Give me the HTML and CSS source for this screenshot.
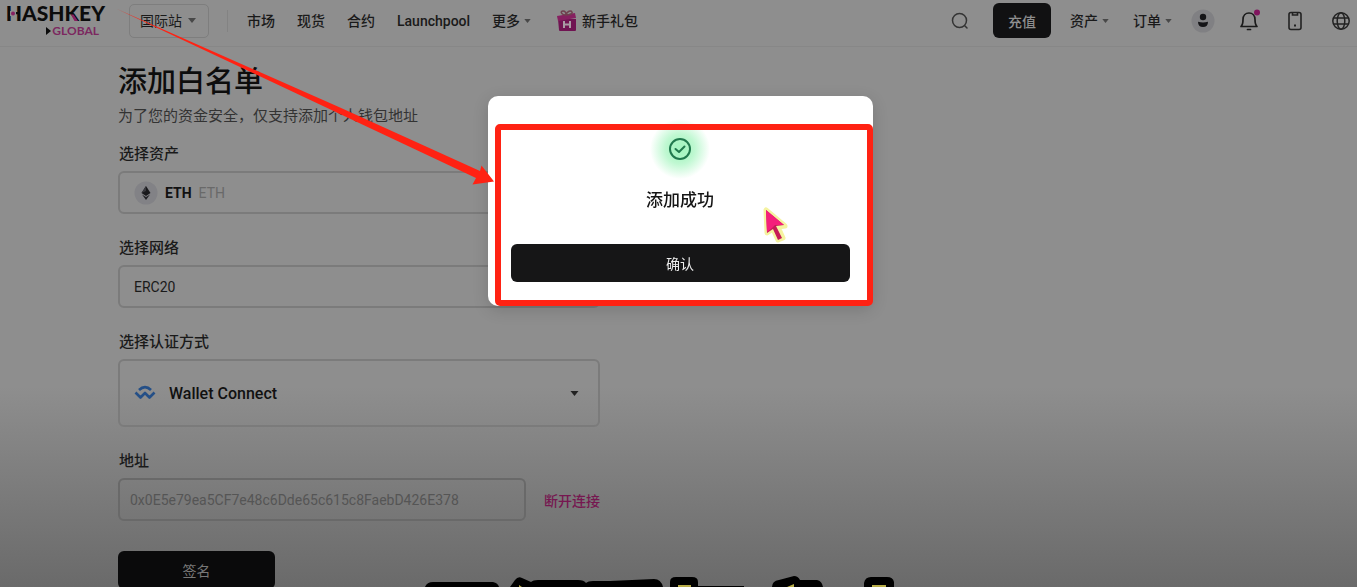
FILE: index.html
```html
<!DOCTYPE html>
<html lang="zh-CN">
<head>
<meta charset="utf-8">
<meta name="viewport" content="width=device-width, initial-scale=1">
<title>添加白名单</title>
<link rel="stylesheet" href="styles.css">
</head>
<body>
<header class="header">
  <a class="logo" href="#" aria-label="HASHKEY GLOBAL">
    <span class="logo-name">HASHKEY</span>
    <span class="logo-sub"><svg width="5" height="8" viewBox="0 0 5 8" aria-hidden="true"><path d="M0 0L5 4L0 8Z" fill="#0c0c0c"/></svg>GLOBAL</span>
    <svg class="logo-accent" width="98" height="18" viewBox="0 0 98 18" aria-hidden="true"><path d="M5 8H11V13H5Z" fill="#8e8e8e"/><circle cx="8" cy="10.500" r="2" fill="#861f61"/><path d="M66 11.500L68.500 11.500L73 18H69.500Z" fill="#861f61"/></svg>
  </a>
  <div class="site">
    <select class="site-select" aria-label="站点"><option>国际站</option></select>
    <svg class="caret" width="8" height="5" viewBox="0 0 8 5" aria-hidden="true"><path d="M0 0H8L4 5Z"/></svg>
  </div>
  <nav class="nav">
    <a href="#">市场</a>
    <a href="#">现货</a>
    <a href="#">合约</a>
    <a href="#">Launchpool</a>
    <button class="menu" type="button">更多<svg class="caret" width="7" height="4" viewBox="0 0 8 5" aria-hidden="true"><path d="M0 0H8L4 5Z"/></svg></button>
    <a class="gift" href="#"><svg width="20" height="22" viewBox="0 0 20 22" aria-hidden="true"><path d="M1 9H19V20Q19 21 18 21H3Q2 21 2 20Z" fill="#701452"/><path d="M0 6L18 3L19 8L1 11Z" fill="#862060"/><path d="M9 5C4 5 3 1 6 1C8 1 9 3 9 5C10 1 14 0 15 2C16 4 12 5 9 5" fill="none" stroke="#70404f" stroke-width="1.5"/><path d="M7 11V18M13 11V18M7 14.5H13" fill="none" stroke="#a99ba4" stroke-width="2"/></svg>新手礼包</a>
  </nav>
  <div class="tools">
    <button class="icon" type="button" aria-label="搜索"><svg width="18" height="18" viewBox="0 0 18 18" fill="none" stroke="#343434" stroke-width="1.5" stroke-linecap="round"><circle cx="8.5" cy="8.5" r="7"/><path d="M14 14L16 16"/></svg></button>
    <button class="deposit" type="button">充值</button>
    <button class="menu" type="button">资产<svg class="caret" width="7" height="4" viewBox="0 0 8 5" aria-hidden="true"><path d="M0 0H8L4 5Z"/></svg></button>
    <button class="menu orders" type="button">订单<svg class="caret" width="7" height="4" viewBox="0 0 8 5" aria-hidden="true"><path d="M0 0H8L4 5Z"/></svg></button>
    <button class="icon" type="button" aria-label="账户"><svg width="24" height="24" viewBox="0 0 24 24"><circle cx="12" cy="12" r="11.5" fill="#808083"/><circle cx="12" cy="8" r="3.2" fill="#151518"/><path d="M7 12.800Q12 14 17 12.800Q17 18 12 18Q7 18 7 12.800Z" fill="#151518"/></svg></button>
    <button class="icon" type="button" aria-label="通知"><svg width="22" height="24" viewBox="0 0 22 24" fill="none" stroke="#1b1b1b" stroke-width="1.7" stroke-linejoin="round" stroke-linecap="round"><path d="M3 17.500C5 15.500 5 13.500 5 10.500C5 6.500 7.500 4 11 4S17 6.500 17 10.500C17 13.500 17 15.500 19 17.500Z"/><path d="M9.500 20.500H12.500"/><circle cx="19" cy="3.500" r="3" fill="#80155e" stroke="none"/></svg></button>
    <button class="icon" type="button" aria-label="下载应用"><svg width="16" height="20" viewBox="0 0 16 20" fill="none" stroke="#222" stroke-width="1.600"><rect x="2" y="1.500" width="12" height="17" rx="2"/><path d="M5.500 2V4H10.500V2"/><path d="M7 14.500H9" stroke-width="2"/></svg></button>
    <button class="icon" type="button" aria-label="语言"><svg width="20" height="20" viewBox="0 0 20 20" fill="none" stroke="#222" stroke-width="1.500"><circle cx="10" cy="10" r="8.200"/><ellipse cx="10" cy="10" rx="3.800" ry="8.200"/><path d="M2.500 7H17.500M2.500 13H17.500"/></svg></button>
  </div>
</header>

<main class="main">
  <h1 class="title">添加白名单</h1>
  <p class="subtitle">为了您的资金安全，仅支持添加个人钱包地址</p>
  <form class="form">
    <div class="group">
      <label class="label" for="asset">选择资产</label>
      <button class="field asset" id="asset" type="button">
        <svg width="24" height="24" viewBox="0 0 24 24" aria-hidden="true"><circle cx="12" cy="12" r="11.500" fill="#828286"/><path d="M12 5L16.500 12L12 15L7.500 12Z" fill="#19191c"/><path d="M8 13.500L12 16L16 13.500L12 19Z" fill="#222226"/><path d="M12 5V10L7.500 12Z" fill="#38383d"/></svg>
        <span class="coin">ETH</span><span class="coin-name">ETH</span>
      </button>
    </div>
    <div class="group">
      <label class="label" for="network">选择网络</label>
      <select class="field network" id="network"><option>ERC20</option></select>
    </div>
    <div class="group">
      <label class="label" for="auth">选择认证方式</label>
      <div class="auth">
        <select class="field auth-select" id="auth"><option>Wallet Connect</option></select>
        <svg class="auth-icon" width="22" height="16" viewBox="0 0 22 16" fill="none" stroke="#244f87" stroke-width="2.600" stroke-linejoin="round" aria-hidden="true"><path d="M5 5Q11 -1 17 5"/><path d="M1.500 7.500L6.500 12.500L11 8L15.500 12.500L20.500 7.500"/></svg>
        <svg class="auth-caret" width="9" height="5" viewBox="0 0 8 5" aria-hidden="true"><path d="M0 0H8L4 5Z" fill="#222"/></svg>
      </div>
    </div>
    <div class="group">
      <label class="label" for="address">地址</label>
      <div class="address-row">
        <input class="field address" id="address" type="text" value="0x0E5e79ea5CF7e48c6Dde65c615c8FaebD426E378" disabled>
        <a class="disconnect" href="#">断开连接</a>
      </div>
    </div>
    <button class="sign" type="button">签名</button>
  </form>
</main>

<div class="overlay">
  <section class="dialog" role="dialog" aria-modal="true" aria-labelledby="dialog-title">
    <div class="glow"><svg width="24" height="24" viewBox="0 0 24 24" fill="none" stroke="#20794d" stroke-width="2" stroke-linecap="round" stroke-linejoin="round" aria-hidden="true"><circle cx="12" cy="12" r="10"/><path d="M7.500 12L11 15L16.500 9.500"/></svg></div>
    <h2 class="dialog-title" id="dialog-title">添加成功</h2>
    <button class="confirm" type="button">确认</button>
    <div class="highlight"></div>
    <svg class="cursor" width="32" height="42" viewBox="0 0 32 42" aria-hidden="true"><path d="M6 6L7 29L13 25L18 36L23 34L18 23L25 22Z" fill="#ee1c73" stroke="#f5f3a0" stroke-width="5" stroke-linejoin="round"/><path d="M6 6L7 29L13 25L18 36L22 34L16 22L24 21Z" fill="#c61b58"/><path d="M6 6L24 21L15 21L12 24L7 28Z" fill="#f51f7b"/></svg>
  </section>
</div>

<svg class="arrow" width="500" height="200" viewBox="0 0 500 200" aria-hidden="true"><path d="M117 9L340 107.500L480 171L481.500 165.500L494 181.500L472.500 184.500L476 178L340 114Z" fill="#ff2213"/></svg>
<svg class="caption" width="520" height="12" viewBox="420 575 520 12" aria-hidden="true"><path d="M425 587Q427 582 433 582H493Q498 583 499 587ZM510 587L515 580Q518 576 522 578L531 582Q533 580 538 580H578Q584 580 586 583Q588 581 593 581H610L654 579Q661 579 663 587ZM670 587V582Q670 577 676 577H692Q698 577 698 582V586H744V587ZM772 587Q772 581 779 580L794 576Q798 576 800 580H817Q822 581 823 587ZM864 587V583Q865 577 871 577H887Q893 577 894 582V587Z" fill="#000"/><path d="M519 587V585L522 587ZM678 587V585H691V587ZM787 587L794 584V587ZM872 587V585H886V587Z" fill="#b8ad48"/></svg>
</body>
</html>
```

FILE: styles.css
```css
* { box-sizing: border-box; }

html { height: 100%; }

body {
  margin: 0;
  height: 100vh;
  overflow: hidden;
  background: linear-gradient(to top, #6a6a6a, #8e8e8e 200px);
  color: #1a1a1a;
  font-family: Roboto, "Noto Sans CJK SC", sans-serif;
  font-size: 14px;
}

button, select, input { font: inherit; color: inherit; }
button { border: 0; padding: 0; background: none; }
a { color: inherit; text-decoration: none; }
svg { display: block; flex: none; }
h1, h2, p { margin: 0; }
select { appearance: none; }

.header {
  display: flex;
  align-items: center;
  height: 47px;
  padding: 0 5px 5px;
  border-bottom: 1px solid #878787;
}

.logo {
  position: relative;
  display: flex;
  flex-direction: column;
  align-items: flex-end;
  width: 100px;
  font-family: Lato, sans-serif;
}
.logo-name { color: #0c0c0c; font-size: 21px; font-weight: 900; line-height: 20px; }
.logo-sub {
  display: flex;
  align-items: center;
  gap: 1px;
  padding-right: 6px;
  color: #7c2860;
  font-size: 12px;
  font-weight: 700;
  line-height: 16px;
}
.logo-accent { position: absolute; left: 0; top: 0; }

.caret { fill: #484848; }

.site {
  position: relative;
  display: flex;
  align-items: center;
  margin-left: 24px;
}
.site-select {
  width: 80px;
  height: 34px;
  padding: 0 10px;
  border: 1px solid #7e7e7e;
  border-radius: 5px;
  background: transparent;
}
.site .caret { position: absolute; right: 13px; pointer-events: none; }

.nav {
  display: flex;
  align-items: center;
  gap: 22px;
  margin-left: 18px;
  padding-left: 19px;
  border-left: 1px solid #838383;
  line-height: 16px;
  font-weight: 500;
  white-space: nowrap;
}
.menu { display: flex; align-items: center; gap: 4px; font-weight: 500; white-space: nowrap; line-height: 20px; }
.gift { display: flex; align-items: center; gap: 5px; margin-left: 4px; }

.tools { display: flex; align-items: center; gap: 24px; margin-left: auto; }
.icon { display: flex; justify-content: center; width: 22px; }
.orders { margin-right: -4px; }
.deposit {
  width: 58px;
  height: 35px;
  margin: 0 -5px 0 -2px;
  border-radius: 6px;
  background: #111112;
  color: #8e8e8e;
  font-weight: 500;
}

.main { padding: 15px 20px 0 118px; }
.title { color: #0d0d0d; font-size: 29px; font-weight: 500; line-height: 40px; }
.subtitle { margin-top: 2px; color: #333; font-size: 15px; line-height: 24px; }

.form {
  display: flex;
  flex-direction: column;
  gap: 22px;
  max-width: 482px;
  margin-top: 14px;
}
.group { display: flex; flex-direction: column; gap: 5px; }
.label { padding-left: 1px; font-size: 15px; font-weight: 500; line-height: 24px; }

.field {
  width: 100%;
  height: 43px;
  border: 2px solid #7b7b7b;
  border-radius: 6px;
  background: transparent;
}
.asset { display: flex; align-items: center; padding: 0 14px; }
.coin { margin-left: 7px; color: #111; font-weight: 700; }
.coin-name { margin-left: 7px; color: #696969; }
.network { padding: 0 14px; }

.auth { position: relative; display: flex; align-items: center; }
.auth-select { height: 68px; padding: 0 49px; color: #111; font-size: 16px; font-weight: 500; }
.auth-icon { position: absolute; left: 16px; pointer-events: none; }
.auth-caret { position: absolute; right: 21px; pointer-events: none; }

.address-row { display: flex; align-items: center; gap: 18px; }
.address { flex: 1; min-width: 0; padding: 0 10px; border-color: #696969; color: #555; }
.disconnect { color: #761750; font-weight: 500; white-space: nowrap; }

.sign {
  width: 157px;
  height: 38px;
  margin-top: 8px;
  border-radius: 6px;
  background: #0a0a0b;
  color: #777;
}

.overlay {
  position: fixed;
  inset: 0;
  display: flex;
  justify-content: center;
  align-items: flex-start;
  padding: 96px 0 0 3px;
}
.dialog {
  position: relative;
  display: flex;
  flex-direction: column;
  align-items: center;
  width: 385px;
  padding: 23px 23px 24px;
  border-radius: 10px;
  background: #fff;
  box-shadow: 0 4px 16px rgba(0, 0, 0, 0.15);
}
.glow {
  display: grid;
  place-items: center;
  width: 60px;
  height: 60px;
  border-radius: 50%;
  background: radial-gradient(circle closest-side, #a8f5c2 20%, #c0f8d2 50%, #fff);
}
.dialog-title { margin-top: 9px; color: #151515; font-size: 17px; font-weight: 500; line-height: 24px; }
.confirm {
  width: 100%;
  height: 38px;
  margin-top: 32px;
  border-radius: 6px;
  background: #161617;
  color: #eee;
}
.highlight {
  position: absolute;
  inset: 28px 0 0 7px;
  border: 6px solid #ff2213;
  border-radius: 5px;
  pointer-events: none;
}
.cursor { position: absolute; left: 272px; top: 108px; pointer-events: none; }

.arrow { position: fixed; left: 0; top: 0; pointer-events: none; }
.caption { position: fixed; left: 420px; bottom: 0; pointer-events: none; }
```
